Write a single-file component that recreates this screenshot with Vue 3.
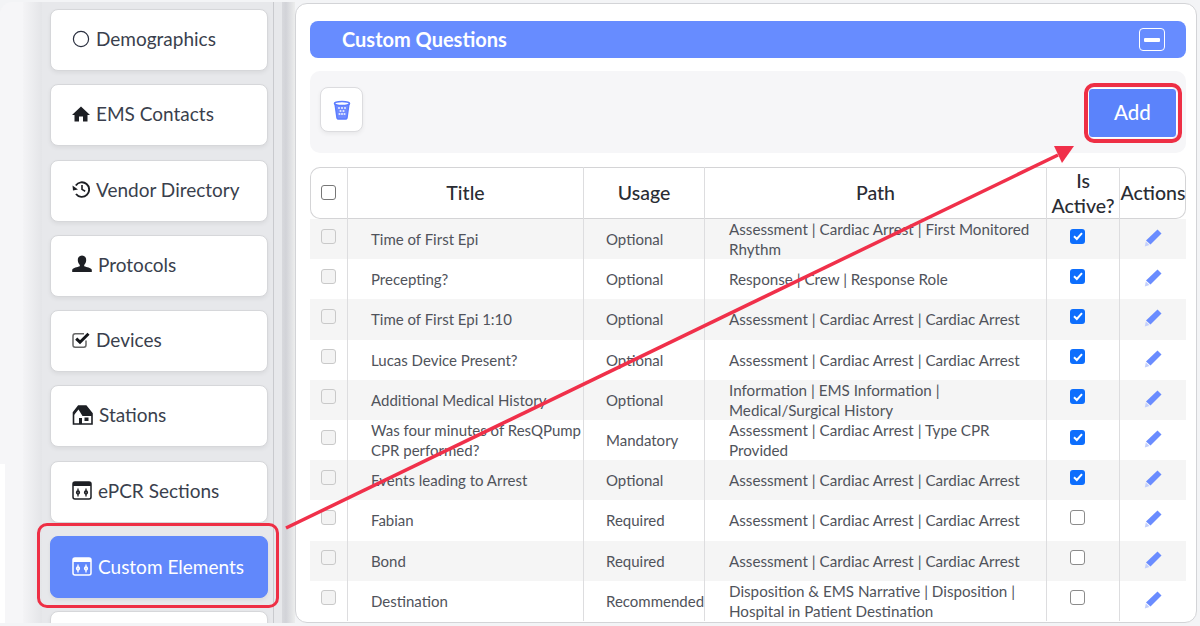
<script setup>
const nav = [
  { label: 'Demographics', icon: 'circle' },
  { label: 'EMS Contacts', icon: 'home' },
  { label: 'Vendor Directory', icon: 'history' },
  { label: 'Protocols', icon: 'user' },
  { label: 'Devices', icon: 'check' },
  { label: 'Stations', icon: 'house' },
  { label: 'ePCR Sections', icon: 'panel' },
  { label: 'Custom Elements', icon: 'panel', active: true },
  { label: '', icon: '' }
]
const rows = [
  ['Time of First Epi', 'Optional', 'Assessment | Cardiac Arrest | First Monitored Rhythm', true],
  ['Precepting?', 'Optional', 'Response | Crew | Response Role', true],
  ['Time of First Epi 1:10', 'Optional', 'Assessment | Cardiac Arrest | Cardiac Arrest', true],
  ['Lucas Device Present?', 'Optional', 'Assessment | Cardiac Arrest | Cardiac Arrest', true],
  ['Additional Medical History', 'Optional', 'Information | EMS Information | Medical/Surgical History', true],
  ['Was four minutes of ResQPump CPR performed?', 'Mandatory', 'Assessment | Cardiac Arrest | Type CPR Provided', true],
  ['Events leading to Arrest', 'Optional', 'Assessment | Cardiac Arrest | Cardiac Arrest', true],
  ['Fabian', 'Required', 'Assessment | Cardiac Arrest | Cardiac Arrest', false],
  ['Bond', 'Required', 'Assessment | Cardiac Arrest | Cardiac Arrest', false],
  ['Destination', 'Recommended', 'Disposition & EMS Narrative | Disposition | Hospital in Patient Destination', false]
]
</script>

<template>
  <div class="page">
    <div class="strip"><i></i></div>
    <div class="shade"></div>
    <aside class="side">
      <div v-for="(n, i) in nav" :key="i" class="nav" :class="{ active: n.active }">
        <svg v-if="n.icon === 'circle'" class="ic" width="18" height="18" viewBox="0 0 18 18"><circle cx="9" cy="9" r="7.6" fill="none" stroke="#2b3040" stroke-width="1.2"/></svg>
        <svg v-if="n.icon === 'home'" class="ic" width="18" height="18" viewBox="0 0 18 18"><path d="M9 1.500 L18 10 L15.500 10 V16.500 H11 V11.500 H7 V16.500 H2.500 V10 H0 Z" fill="#1d1f24"/></svg>
        <svg v-if="n.icon === 'history'" class="ic" width="18" height="18" viewBox="0 0 18 18"><path d="M3.800 5.500A7.300 7.300 0 1 1 4 14" fill="none" stroke="#1d1f24" stroke-width="1.900"/><path d="M0.500 5.500 L6 9.500 L1 10.500Z" fill="#1d1f24"/><path d="M10 5V9.400L13.200 11.200" fill="none" stroke="#1d1f24" stroke-width="1.600"/></svg>
        <svg v-if="n.icon === 'user'" class="ic wide" width="20" height="18" viewBox="0 0 20 18"><path d="M10 0.500c3 0 4.400 2.200 4.200 4.800-.1 2-1 3.600-2 4.600v1.400c2.400.9 6.800 1.600 7.600 3.400V17H.2v-2.300c.8-1.800 5.200-2.500 7.600-3.400V9.900c-1-1-1.900-2.600-2-4.600C5.600 2.700 7 .5 10 .5z" fill="#1d1f24"/></svg>
        <svg v-if="n.icon === 'check'" class="ic" width="18" height="18" viewBox="0 0 18 18"><path d="M14 9.500V14Q14 16.200 11.800 16.200H3.200Q1 16.200 1 14V5Q1 2.800 3.200 2.800H12" fill="none" stroke="#666" stroke-width="1.500"/><path d="M4.200 7.600L8 11.200L16.500 2.800" fill="none" stroke="#15171b" stroke-width="3"/></svg>
        <svg v-if="n.icon === 'house'" class="ic wide" width="21" height="20" viewBox="0 0 21 20"><path d="M6.500 1H14L20 8.500V19H1.500V7.500Z" fill="#fff" stroke="#1d1f24" stroke-width="1.600"/><path d="M6.500 1H14L20 8.500V11H10.500L6.500 4.500L2 10V7.500Z" fill="#1d1f24"/><path d="M7 19V13H10V19Z" fill="#1d1f24"/><rect x="12.500" y="12.500" width="4" height="3.500" fill="#1d1f24"/></svg>
        <svg v-if="n.icon === 'panel'" class="ic wide" width="20" height="19" viewBox="0 0 20 19"><rect x="1" y="1" width="18" height="17" rx="2" fill="none" :stroke="n.active ? '#fff' : '#1d1f24'" stroke-width="1.500"/><rect x="1" y="1" width="18" height="4" :fill="n.active ? '#fff' : '#1d1f24'"/><g :stroke="n.active ? '#fff' : '#1d1f24'" stroke-width="1.300" fill="none"><path d="M6 7.500V15.500M14 7.500V15.500"/><circle cx="6" cy="11.500" r="1.500"/><circle cx="14" cy="11.500" r="1.500"/></g></svg>
        <span>{{ n.label }}</span>
      </div>
    </aside>
    <div class="side-rest"></div>
    <div class="gutter"></div>
    <main class="card">
      <div class="title-bar">
        <h2>Custom Questions</h2>
        <span class="collapse"><i></i></span>
      </div>
      <div class="toolbar">
        <button class="trash">
          <svg width="18" height="20" viewBox="0 0 18 20"><path d="M2 4L4 18Q4.300 19 5.500 19H12.500Q13.700 19 14 18L16 4" fill="#6f8aff" stroke="#5b7cff" stroke-width="1.400"/><ellipse cx="9" cy="3.500" rx="7.500" ry="2" fill="#fff" stroke="#5b7cff" stroke-width="1.600"/><g fill="#e4e9ff"><circle cx="6" cy="8" r="1.100"/><circle cx="9" cy="8" r="1.100"/><circle cx="12" cy="8" r="1.100"/><circle cx="7.500" cy="11" r="1.100"/><circle cx="10.500" cy="11" r="1.100"/><circle cx="6.500" cy="14" r="1.100"/><circle cx="9" cy="14" r="1.100"/><circle cx="11.500" cy="14" r="1.100"/></g></svg>
        </button>
        <button class="add">Add</button>
      </div>
      <div class="thead">
        <div class="c c0"><span class="box head"></span></div>
        <div class="c c1">Title</div>
        <div class="c c2">Usage</div>
        <div class="c c3">Path</div>
        <div class="c c4">Is Active?</div>
        <div class="c c5">Actions</div>
      </div>
      <div v-for="(r, i) in rows" :key="i" class="row" :class="{ odd: i % 2 === 0 }">
        <div class="d c0"><span class="box muted"></span></div>
        <div class="d c1 t">{{ r[0] }}</div>
        <div class="d c2 u">{{ r[1] }}</div>
        <div class="d c3 p">{{ r[2] }}</div>
        <div class="d c4 k">
          <span v-if="r[3]" class="box on"><svg width="14" height="14" viewBox="0 0 14 14"><path d="M3 7.300L5.800 10L11 4.200" fill="none" stroke="#fff" stroke-width="2"/></svg></span>
          <span v-else class="box"></span>
        </div>
        <div class="d c5 a">
          <svg width="18" height="18" viewBox="0 0 18 18"><path d="M13.500 0.500L17.500 4.500L6.500 15.500L2 11.500Z" fill="#6a8cff"/><path d="M1.800 12.500L5.500 16L0.800 17.500Z" fill="#c3cffc"/></svg>
        </div>
      </div>
    </main>
    <div class="mark mark-nav"></div>
    <div class="mark mark-add"></div>
    <svg class="arrow" width="1200" height="626" viewBox="0 0 1200 626">
      <line x1="286" y1="528" x2="1058" y2="155" stroke="#f0304a" stroke-width="3.500"/>
      <path d="M1074 146L1062 163L1054 146Z" fill="#f0304a"/>
    </svg>
  </div>
</template>

<style>
html, body { margin: 0; background: #f3f4f6; overflow: hidden; }
</style>

<style scoped>
.page { position: relative; display: flex; width: 1200px; height: 626px; padding: 2px 0 3px; box-sizing: border-box; font-family: Lato, "Liberation Sans", sans-serif; color: #3a3f4b; overflow: hidden; background: #f3f4f6; }
.strip { width: 23px; display: flex; flex-direction: column; justify-content: flex-end; background: #f6f6f8; border-radius: 12px 0 0 0; }
.strip i { display: block; width: 5px; height: 159px; background: #fff; }
.shade { width: 19px; background: linear-gradient(90deg, #f4f4f6, #e4e5e8); }
.side { width: 232px; box-sizing: border-box; padding: 7px 5px 0 8px; background: #e7e8eb; border-right: 1px solid #c9cace; overflow: hidden; display: flex; flex-direction: column; gap: 13.300px; }
.side-rest { width: 8px; background: #e7e8eb; }
.nav { flex: 0 0 62px; box-sizing: border-box; display: flex; align-items: center; gap: 6px; padding: 0 0 3px 21px; background: #fff; border: 1px solid #d6d7da; border-radius: 8px; font-size: 19px; color: #3a3f4d; box-shadow: 0 2px 4px rgba(0,0,0,.06); white-space: nowrap; }
.nav.active { background: #6188fb; border-color: #6188fb; color: #fff; padding-bottom: 2px; }
.ic { flex: none; }
.gutter { width: 13px; background: linear-gradient(90deg, #d8d9dd 0, #d2d3d8 30%, #eceded 100%); }
.card { width: 902px; margin-top: 1px; box-sizing: border-box; padding: 17px 10px 0 14px; background: #fff; border: 1px solid #d3d4d7; border-radius: 12px; overflow: hidden; }
.title-bar { height: 37px; box-sizing: border-box; display: flex; align-items: center; justify-content: space-between; padding: 0 21px 1px 32px; background: #678cff; border-radius: 8px; color: #fff; }
h2 { margin: 0; font-size: 20px; font-weight: 700; color: #fff; }
.collapse { width: 26px; height: 23px; box-sizing: border-box; margin-top: 1px; display: flex; align-items: center; justify-content: center; border: 1px solid #fff; border-radius: 4px; }
.collapse i { width: 16px; height: 4px; background: #fff; border-radius: 1px; }
.toolbar { height: 82px; margin-top: 13px; box-sizing: border-box; display: flex; align-items: flex-start; justify-content: space-between; padding: 17px 9px 0 10px; background: #f6f6f8; border-radius: 10px; }
.trash { width: 43px; height: 45px; margin-top: -1px; padding: 0; display: flex; align-items: center; justify-content: center; background: #fff; border: 1px solid #dcdcdf; border-radius: 8px; box-shadow: 0 2px 4px rgba(0,0,0,.06); }
.add { width: 89px; height: 50px; padding: 0 0 2px; border: 1px solid #fff; border-radius: 4px; background: #5b83fb; color: #fff; font: 500 20.500px Lato, sans-serif; }
.thead { display: flex; height: 52px; margin-top: 14px; box-sizing: border-box; box-shadow: inset 0 0 0 1px #d4d4d6; border-radius: 10px; font-size: 19.500px; font-weight: 500; color: #2a2c33; }
.c, .d { box-sizing: border-box; display: flex; align-items: center; justify-content: center; border-right: 1px solid #dddddf; text-align: center; }
.c { padding-bottom: 1px; }
.c5 { border-right: 0; }
.c0 { width: 38px; flex: none; padding-right: 1px; }
.c1 { width: 236px; flex: none; }
.c2 { width: 121px; flex: none; }
.c3 { width: 342px; flex: none; }
.c4 { width: 73px; flex: none; line-height: 25px; }
.c5 { width: 66px; flex: none; white-space: nowrap; }
.row { display: flex; height: 40.200px; font-size: 15px; line-height: 20px; color: #50535b; }
.row.odd { background: #f5f5f5; }
.d.t, .d.p { justify-content: flex-start; text-align: left; }
.d.t { padding-left: 23px; }
.d.u { justify-content: flex-start; padding-left: 22px; white-space: nowrap; text-align: left; }
.d.p { padding: 0 14px 0 24px; font-size: 15.200px; }
.d { padding-bottom: 6px; }
.d.t, .d.u, .d.p { padding-bottom: 0; }
.d.k { padding-right: 11px; }
.d.a { padding-bottom: 2px; }
.box { width: 15px; height: 15px; box-sizing: border-box; border: 1.500px solid #8b8b8b; border-radius: 3px; background: #fff; display: flex; align-items: center; justify-content: center; }
.box.head { border-color: #777; }
.box.muted { border-color: #c9c9c9; background: #f3f3f3; }
.box.on { background: #0d6efd; border: 0; }
.mark { position: absolute; box-sizing: border-box; border-style: solid; border-color: #ee2f45; border-radius: 10px; pointer-events: none; }
.mark-nav { left: 37px; top: 523px; width: 242px; height: 85px; border-width: 3px; }
.mark-add { left: 1084px; top: 83px; width: 98px; height: 60px; border-width: 4px; }
.arrow { position: absolute; left: 0; top: 0; pointer-events: none; }
</style>
